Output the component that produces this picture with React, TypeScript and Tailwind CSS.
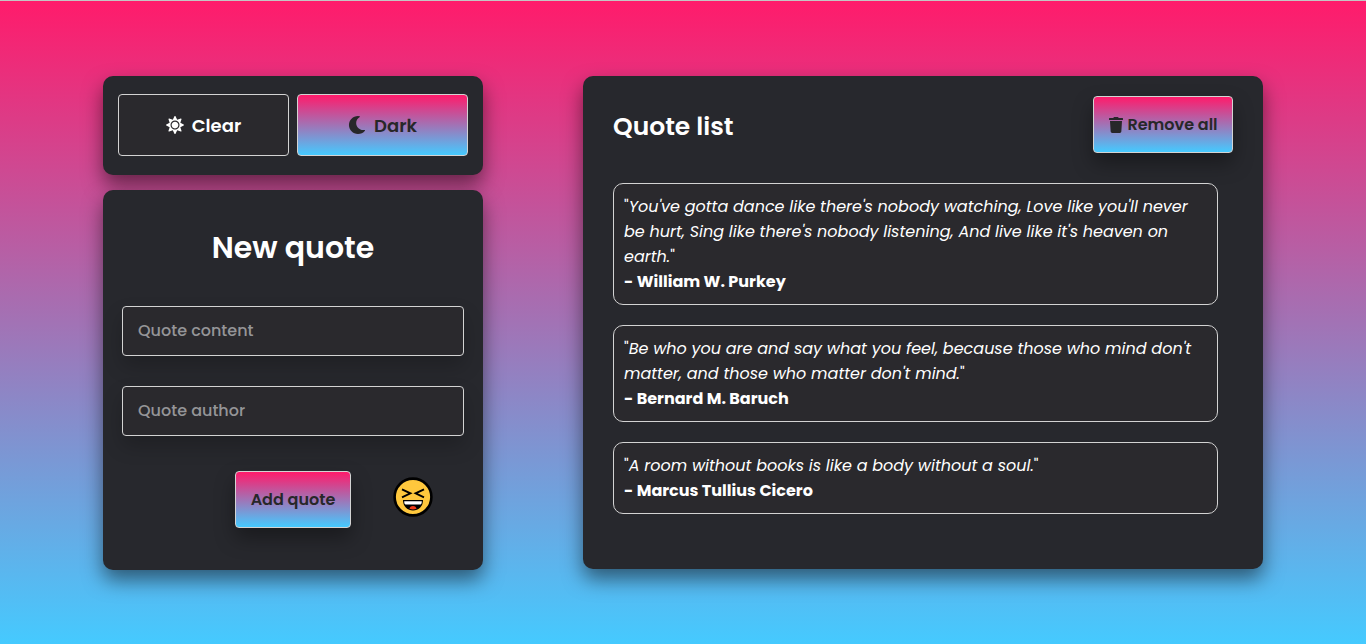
import { useState } from "react";
import type { FormEvent } from "react";
import { FaMoon, FaSun, FaTrash } from "react-icons/fa";

type Quote = { content: string; author: string };

const INITIAL_QUOTES: Quote[] = [
  {
    content:
      "You've gotta dance like there's nobody watching, Love like you'll never be hurt, Sing like there's nobody listening, And live like it's heaven on earth.",
    author: "William W. Purkey",
  },
  {
    content:
      "Be who you are and say what you feel, because those who mind don't matter, and those who matter don't mind.",
    author: "Bernard M. Baruch",
  },
  {
    content: "A room without books is like a body without a soul.",
    author: "Marcus Tullius Cicero",
  },
];

function LaughingFace() {
  return (
    <svg viewBox="0 0 40 40" className="size-10" role="img" aria-label="Laughing face">
      <circle cx="20" cy="20" r="18.4" fill="#ffc83d" stroke="#000" strokeWidth="2.6" />
      <path
        d="M9 12.3l8.4 4-8.4 4M31 12.3l-8.4 4 8.4 4"
        fill="none"
        stroke="#000"
        strokeWidth="1.9"
        strokeLinejoin="miter"
      />
      <path d="M10 23h20c0 6.2-4 10.5-10 10.5S10 29.2 10 23z" fill="#000" />
      <path d="M11.2 24.3h17.6c0 2.2-.6 3.3-1.4 3.3H12.6c-.8 0-1.4-1.1-1.4-3.3z" fill="#fff" />
      <path d="M16.4 31.8c.6-2 2-2.7 3.6-2.7s3 .7 3.6 2.7c-2.2 1-5 1-7.2 0z" fill="#f03a17" />
    </svg>
  );
}

const card = "rounded-[10px] bg-[#27282d] shadow-[0_10px_20px_rgba(0,0,0,0.5)]";
const gradient = "bg-linear-to-b/srgb from-[#ff1b6b] to-[#45caff] text-[#272729]";
const action =
  "rounded-[4px] border border-[#d3d3d3] text-base font-semibold shadow-[0_10px_20px_rgba(0,0,0,0.35)]";
const toggle =
  "flex h-[62px] items-center justify-center gap-2 rounded-[4px] border border-[#d3d3d3] text-lg leading-[27px] font-semibold";
const field =
  "h-[50px] w-full rounded-[4px] border border-[#d3d3d3] bg-[#2a292d] px-[15px] pb-0.5 text-base font-medium text-white shadow-[0_10px_20px_rgba(0,0,0,0.2)] outline-none placeholder:text-[#959598]";

export default function App() {
  const [quotes, setQuotes] = useState(INITIAL_QUOTES);
  const [content, setContent] = useState("");
  const [author, setAuthor] = useState("");

  const addQuote = (event: FormEvent) => {
    event.preventDefault();
    if (!content || !author) return;
    setQuotes([...quotes, { content, author }]);
    setContent("");
    setAuthor("");
  };

  return (
    <div className="min-h-screen border-t border-[#c4c4c4] bg-linear-to-b/srgb from-[#ff1b6b] to-[#45caff] px-6 pt-[75px] pb-[74px] font-['Poppins','Inter',sans-serif] text-white">
      <main className="mx-auto flex max-w-[1160px] flex-wrap items-start gap-x-[100px] gap-y-4 lg:flex-nowrap">
        <div className="flex w-[380px] shrink-0 flex-col gap-[15px]">
          <section className={`${card} grid grid-cols-2 gap-2 px-[15px] pt-[18px] pb-[19px]`}>
            <button type="button" className={`${toggle} bg-[#2a292d]`}>
              <FaSun aria-hidden="true" />
              Clear
            </button>
            <button type="button" className={`${toggle} ${gradient}`}>
              <FaMoon aria-hidden="true" />
              Dark
            </button>
          </section>

          <form onSubmit={addQuote} className={`${card} px-[19px] pt-[34px] pb-[42px]`}>
            <h1 className="text-center text-[30px] leading-12 font-semibold">New quote</h1>
            <div className="mt-[34px] flex flex-col gap-[30px]">
              <input
                aria-label="Quote content"
                placeholder="Quote content"
                value={content}
                onChange={(event) => setContent(event.target.value)}
                className={field}
              />
              <input
                aria-label="Quote author"
                placeholder="Quote author"
                value={author}
                onChange={(event) => setAuthor(event.target.value)}
                className={field}
              />
            </div>
            <div className="mt-[35px] grid grid-cols-[1fr_auto_1fr] items-center">
              <button
                type="submit"
                className={`${gradient} ${action} col-start-2 h-[57px] w-[116px]`}
              >
                Add quote
              </button>
              <div className="flex justify-center pb-1.5 pl-2.5">
                <LaughingFace />
              </div>
            </div>
          </form>
        </div>

        <section className={`${card} min-w-0 flex-1 px-[30px] pt-5 pb-[55px]`}>
          <header className="flex items-center justify-between">
            <h2 className="pt-1 text-[25px] leading-10 font-semibold">Quote list</h2>
            <button
              type="button"
              onClick={() => setQuotes([])}
              className={`${gradient} ${action} flex h-[57px] w-[140px] items-center justify-center gap-[3px]`}
            >
              <FaTrash aria-hidden="true" />
              Remove all
            </button>
          </header>
          <ul className="mt-[30px] mr-[15px] flex flex-col gap-5">
            {quotes.map((quote) => (
              <li
                key={quote.content}
                className="rounded-[10px] border border-[#d3d3d3] bg-[#2a292d] p-[10px] text-base leading-[25px]"
              >
                <p>
                  "<em>{quote.content}</em>"
                </p>
                <p className="font-bold">- {quote.author}</p>
              </li>
            ))}
          </ul>
        </section>
      </main>
    </div>
  );
}
